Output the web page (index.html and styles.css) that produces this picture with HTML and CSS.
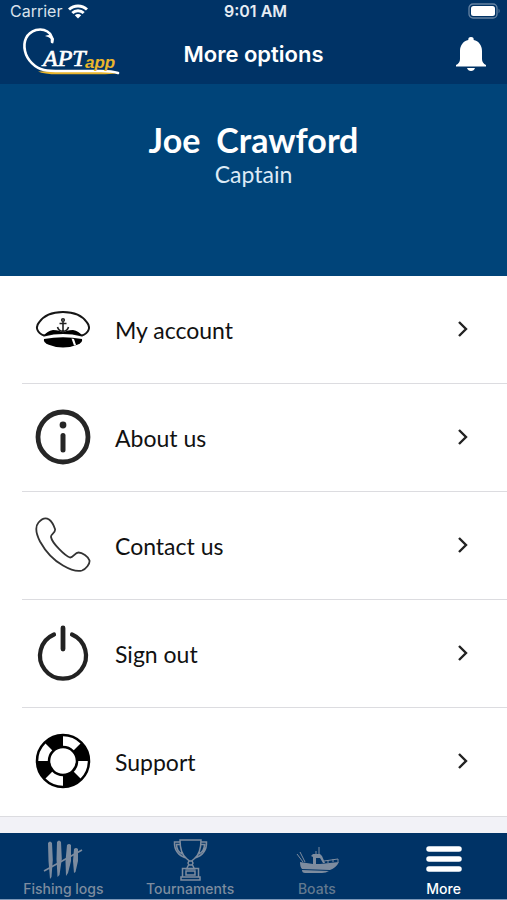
FILE: index.html
```
<!DOCTYPE html>
<html lang="en">
<head>
  <meta charset="UTF-8">
  <meta name="viewport" content="width=device-width, initial-scale=1">
  <title>More options</title>
  <link rel="stylesheet" href="styles.css">
</head>
<body>
  <header class="top">
    <div class="status">
      <div class="carrier">
        <span>Carrier</span>
        <svg width="20" height="16" viewBox="0 0 20 16" fill="none" stroke="#fff" stroke-width="3">
          <path d="M1 6.5a13 13 0 0 1 18 0M4.3 10a8.3 8.3 0 0 1 11.4 0"/>
          <path d="M10 15.5L6.8 12.3a4.6 4.6 0 0 1 6.4 0z" fill="#fff" stroke="none"/>
        </svg>
      </div>
      <div class="time">9:01 AM</div>
      <div class="battery">
        <svg width="33" height="16" viewBox="0 0 33 16">
          <rect x="1" y="1" width="28" height="14" rx="4" fill="none" stroke="#6684a3" stroke-width="1.3"/>
          <rect x="3" y="3" width="24" height="10" rx="2.5" fill="#fff"/>
          <path d="M30.6 5.5q2 2.500 0 5z" fill="#6684a3"/>
        </svg>
      </div>
    </div>
    <div class="navbar">
      <a class="logo" href="#" aria-label="Captapp home">
        <svg width="102" height="56" viewBox="0 0 102 56">
          <path d="M18 45.500Q24 48.500 40 48.300H85Q94 48 99 47Q90 44 80 44z" fill="#e9b52c"/>
          <path d="M32 16C33 6 24 2 16 4C6 7 3 16 5 25C7 34 15 42 24 44Q29 45 41 45H81Q92 45 98 47" fill="none" stroke="#fff" stroke-width="2.600" stroke-linecap="round"/>
          <path d="M33 18q-1-7-8-8q7-3 9 3z" fill="#fff"/>
          <text class="logo-apt" x="23" y="40">APT</text>
          <text class="logo-app" x="65" y="42">app</text>
        </svg>
      </a>
      <h1>More options</h1>
      <button class="bell" type="button" aria-label="Notifications">
        <svg width="32" height="36" viewBox="0 0 32 36" fill="#fff">
          <path d="M16 1a2.700 2.700 0 0 1 2.700 3C23.500 5 27 9 27 15v8q0 4 4 6v1.500H1V29q4-2 4-6v-8C5 9 8.500 5 13.300 4A2.700 2.700 0 0 1 16 1z"/>
          <path d="M12 32h8q-1 3-4 3t-4-3z"/>
        </svg>
      </button>
    </div>
  </header>

  <section class="profile">
    <h2><span>Joe</span> <span>Crawford</span></h2>
    <p>Captain</p>
  </section>

  <nav class="options">
    <a class="option" href="#">
      <svg class="icon" viewBox="0 0 56 56">
        <path d="M9 34.500C2 32 0 26 4 21.500C9 14 18 11 28 11s19 3 24 10.500C56 26 54 32 47 34.500Q28 29.500 9 34.500z" fill="#fff" stroke="#161616" stroke-width="2"/>
        <path d="M9 34.500Q12 30 18 29Q25 29 28 32Q31 29 38 29Q44 30 47 34.500Q28 30.500 9 34.500z" fill="#000"/>
        <path d="M9 38Q28 34.500 47 38Q48 41 43 43.500Q36 46.500 28 46.500t-15-3Q8 41 9 38z" fill="#000"/>
        <path d="M36.500 37.500l2.500 7 2-.5-2-6z" fill="#fff"/>
        <g fill="none" stroke="#222" stroke-width="1.600">
          <circle cx="28" cy="19" r="1.300"/>
          <path d="M28 20.500v9.500M24.500 22.500h7M22.500 26q1 4 5.500 4.500q4.500-.5 5.500-4.500"/>
        </g>
      </svg>
      <span class="name">My account</span>
      <svg class="arrow" viewBox="0 0 12 18"><path d="M2 2l7 7-7 7"/></svg>
    </a>
    <a class="option" href="#">
      <svg class="icon" viewBox="0 0 56 56" fill="none" stroke="#262626" stroke-linecap="round">
        <circle cx="28" cy="28" r="25" stroke-width="4.800"/>
        <path d="M28 26.500v14.500" stroke-width="5"/>
        <circle cx="28" cy="16" r="3.400" fill="#262626" stroke="none"/>
      </svg>
      <span class="name">About us</span>
      <svg class="arrow" viewBox="0 0 12 18"><path d="M2 2l7 7-7 7"/></svg>
    </a>
    <a class="option" href="#">
      <svg class="icon" viewBox="0 0 56 56" fill="none" stroke="#333" stroke-width="1.800" stroke-linejoin="round">
        <path d="M3.500 5.500C7 1.500 11 .5 14 2.500C17 4.500 19 9 20 12C21 16 15.500 17 16 20C17 26 30 39 35 40.500C38 41 40 35.500 43.500 35.500C47 35.500 53.500 39.500 54.500 43.500C55 47 51 52 47 53.500C42 55 34 52 28 48.500C18 43 10 33.500 5 24.500C1.500 17.500 0 9.500 3.500 5.500z"/>
      </svg>
      <span class="name">Contact us</span>
      <svg class="arrow" viewBox="0 0 12 18"><path d="M2 2l7 7-7 7"/></svg>
    </a>
    <a class="option" href="#">
      <svg class="icon" viewBox="0 0 56 56" fill="none" stroke="#222" stroke-width="4.200" stroke-linecap="round">
        <path d="M19 9.500A23 23 0 1 0 37 9.500"/>
        <path d="M28 3v21" stroke-width="4.800"/>
      </svg>
      <span class="name">Sign out</span>
      <svg class="arrow" viewBox="0 0 12 18"><path d="M2 2l7 7-7 7"/></svg>
    </a>
    <a class="option" href="#">
      <svg class="icon" viewBox="0 0 56 56">
        <circle cx="28" cy="28" r="20" fill="#fff" stroke="#000" stroke-width="14.500"/>
        <circle cx="28" cy="28" r="20" fill="none" stroke="#fff" stroke-width="9.500" pathLength="8" stroke-dasharray="1 1"/>
      </svg>
      <span class="name">Support</span>
      <svg class="arrow" viewBox="0 0 12 18"><path d="M2 2l7 7-7 7"/></svg>
    </a>
  </nav>

  <nav class="tabs">
    <a class="tab" href="#">
      <svg width="44" height="44" viewBox="0 0 44 44" fill="#7d8c9f">
        <path d="M7 6q2-3 4 0l.8 17-1.300 17-1.500 2-1.500-18zM16 5q2-3 4 0l.8 17-2.300 16-2 2-1-18zM26 8q2-2 4 0v16l-3 12-2 3-.5-15zM33 12q2-2 4 0v12l-2.500 11-1.500 1-1-12z"/>
        <path d="M3 34l38-21" fill="none" stroke="#7d8c9f" stroke-width="1.600"/>
      </svg>
      <span>Fishing logs</span>
    </a>
    <a class="tab" href="#">
      <svg width="44" height="44" viewBox="0 0 44 44" fill="none" stroke="#7d8c9f" stroke-width="1.500">
        <path d="M12 3h21q0 14-7 19l-2.500 2h-2L19 22q-7-5-7-19zM12 5H6.500Q6 17 18 21M33 5h5.500Q39 17 27 21M12.500 7.500H8.500q0 7 6 9.500M32.500 7.500h4q0 7-6 9.500"/>
        <path d="M21 24l-1 2 1 2h3l1-2-1-2M20.500 28l-2 4h8l-2-4M14.500 31.500h16V40h-16zM18 34h9v4h-9zM13 40h19v3H13z"/>
      </svg>
      <span>Tournaments</span>
    </a>
    <a class="tab boats" href="#">
      <svg width="44" height="44" viewBox="0 0 44 44" fill="#7d8c9f">
        <path d="M5 25l13 2h7l19-2q-3 6-9 8L7 32q-2-2-2-7z"/>
        <path d="M7 33l27 1q-3 2-7 2H10q-3 0-3-3z"/>
        <path d="M18 27v-7l-2-1 2-2h7l2 2 3 7h-2l-3-5h-4v6z"/>
        <path d="M8 25L2 17M10 25L5 15M24 18V10M21 17v-3M29 24l14-2M33 23v3M38 22v3M43 22v3" fill="none" stroke="#7d8c9f"/>
      </svg>
      <span>Boats</span>
    </a>
    <a class="tab active" href="#">
      <svg width="44" height="44" viewBox="0 0 44 44" fill="none" stroke="#fff" stroke-width="5.500" stroke-linecap="round">
        <path d="M7 12h30M7 22h30M7 32h30"/>
      </svg>
      <span>More</span>
    </a>
  </nav>
</body>
</html>
```
FILE: styles.css
```
* { box-sizing: border-box; }
body {
  margin: 0;
  min-height: 100vh;
  display: flex;
  flex-direction: column;
  font-family: Lato, sans-serif;
  background: #f2f2f7;
  color: #111;
}
a { color: inherit; text-decoration: none; }
h1, h2, p { margin: 0; }

.top {
  background: #003366;
  color: #fff;
  font-family: Inter, sans-serif;
  height: 84px;
}
.status, .navbar {
  display: grid;
  grid-template-columns: 1fr auto 1fr;
  align-items: center;
}
.status { height: 22px; padding: 0 6px 0 10px; font-size: 16px; }
.carrier { display: flex; align-items: center; gap: 6px; color: #d9e2ec; }
.time { font-weight: 600; color: #e6ecf3; }
.battery, .bell { justify-self: end; }
.battery svg, .logo svg, .bell svg { display: block; }
.navbar { height: 62px; padding: 2px 20px 0; }
.logo-apt {
  font: italic 24px "Liberation Serif", serif;
  fill: #fff;
  stroke: #fff;
  stroke-width: 0.7;
}
.logo-app { font: italic bold 17px "Liberation Sans", sans-serif; fill: #e9b52c; }
h1 { font-size: 22px; font-weight: 600; line-height: 28px; }
.bell { padding: 0; border: none; background: none; cursor: pointer; }

.profile {
  height: 192px;
  padding-top: 36px;
  background: #004479;
  color: #fff;
  text-align: center;
}
h2 {
  display: flex;
  justify-content: center;
  gap: 16px;
  font-size: 34px;
  line-height: 40px;
}
.profile p { font-size: 23px; line-height: 28px; color: #dceaf6; }

.options { background: #fff; border-bottom: 1px solid #dcdce0; }
.option {
  display: flex;
  align-items: center;
  height: 108px;
  margin-left: 22px;
  padding: 0 38px 2px 13px;
  border-bottom: 1px solid #dcdce0;
}
.option:last-child { border-bottom: none; }
.icon { width: 56px; height: 56px; }
.name { flex: 1; margin-left: 24px; padding-top: 2px; font-size: 23px; }
.arrow {
  width: 12px;
  height: 18px;
  fill: none;
  stroke: #222;
  stroke-width: 2.4;
}

.tabs {
  display: grid;
  grid-template-columns: repeat(4, 1fr);
  height: 67px;
  margin-top: auto;
  background: #003366;
  border-bottom: 1px solid #7d98b8;
  color: #7d8c9f;
  font: 500 14px/16px Inter, sans-serif;
}
.tab {
  display: flex;
  flex-direction: column;
  align-items: center;
  padding-top: 4px;
}
.boats { color: #63798f; }
.active { color: #fff; }
```
